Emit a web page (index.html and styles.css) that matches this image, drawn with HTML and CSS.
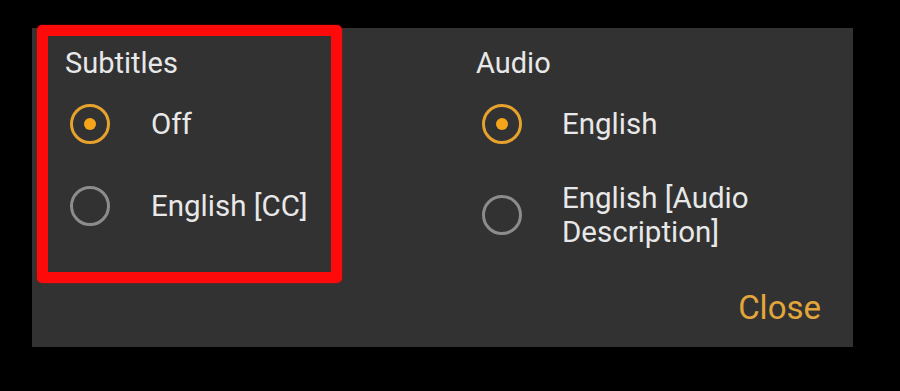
FILE: index.html
```html
<!DOCTYPE html>
<html lang="en">
<head>
<meta charset="utf-8">
<title>Subtitles and Audio</title>
<link rel="stylesheet" href="styles.css">
</head>
<body>
<div class="dialog">
  <div class="columns">
    <section class="section subtitles">
      <h2 class="section-title">Subtitles</h2>
      <div class="option">
        <span class="radio checked"></span>
        <span class="label">Off</span>
      </div>
      <div class="option">
        <span class="radio"></span>
        <span class="label">English [CC]</span>
      </div>
    </section>
    <section class="section audio">
      <h2 class="section-title">Audio</h2>
      <div class="option">
        <span class="radio checked"></span>
        <span class="label">English</span>
      </div>
      <div class="option">
        <span class="radio"></span>
        <span class="label">English [Audio<br>Description]</span>
      </div>
    </section>
  </div>
  <div class="actions">
    <span class="close-btn">Close</span>
  </div>
</div>
</body>
</html>
```

FILE: styles.css
```css
html, body {
  margin: 0;
  padding: 0;
  background: #000;
}

body {
  width: 900px;
  height: 391px;
  overflow: hidden;
  font-family: Roboto, "Noto Sans", "Liberation Sans", sans-serif;
  color: #e6e6e6;
}

.dialog {
  box-sizing: border-box;
  margin: 28px 0 0 32px;
  width: 821px;
  height: 319px;
  background: #323232;
  display: flex;
  flex-direction: column;
}

.columns {
  display: flex;
  align-items: flex-start;
}

.section {
  box-sizing: border-box;
}

.subtitles {
  width: 305px;
  height: 258px;
  margin: -3px 0 0 5px;
  padding: 11px 0 0 17px;
  border: 11px solid #ff0a0a;
  border-radius: 5px;
  box-shadow: 0 0 2px rgba(255, 0, 0, 0.6);
}

.audio {
  margin-left: 134px;
  padding-top: 19px;
}

.subtitles .section-title {
  margin-top: 0;
}

.section-title {
  margin: 0 0 4px 0;
  font-size: 29px;
  line-height: 32px;
  font-weight: 400;
  color: #e8e8e8;
}

.option {
  display: flex;
  align-items: center;
  gap: 41px;
  padding: 18px 0 18px 5px;
  min-height: 46px;
}

.audio .option {
  padding-left: 6px;
  gap: 40px;
}

.audio .option + .option {
  padding-top: 16px;
}

.radio {
  box-sizing: border-box;
  flex: none;
  width: 40px;
  height: 40px;
  border-radius: 50%;
  border: 3.5px solid #8c8c8c;
  display: flex;
  align-items: center;
  justify-content: center;
}

.radio.checked {
  border-color: #e6a22c;
}

.radio.checked::after {
  content: "";
  width: 12px;
  height: 12px;
  border-radius: 50%;
  background: #f6a51a;
}

.label {
  font-size: 29.5px;
  line-height: 34px;
  color: #e8e8e8;
}

.actions {
  margin-top: auto;
  display: flex;
  justify-content: flex-end;
  padding: 0 32px 23px 0;
}

.close-btn {
  font-size: 33px;
  line-height: 32px;
  color: #e2a63a;
}
```
